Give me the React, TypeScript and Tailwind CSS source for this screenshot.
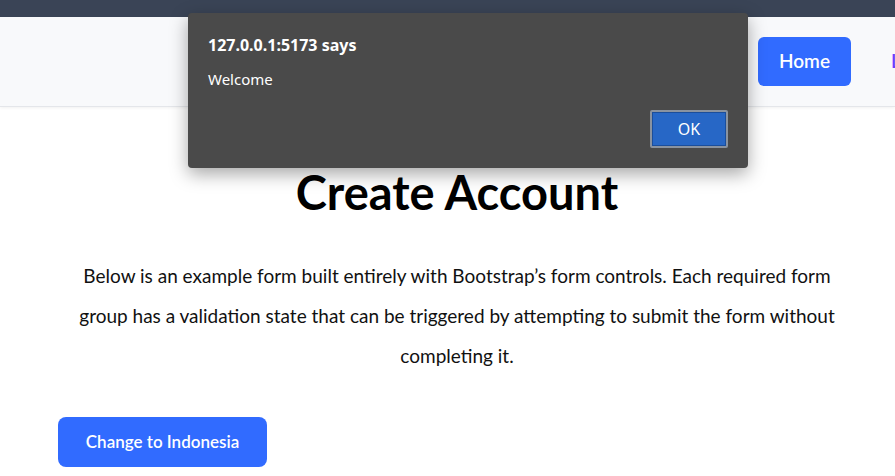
import React from "react";

export default function App() {
  return (
    <div className="relative h-[476px] w-[895px] overflow-hidden bg-white" style={{ fontFamily: "Lato, 'Open Sans', sans-serif" }}>
      <div className="h-[17px] bg-[#3a4456]" />
      <nav className="flex h-[90px] items-center justify-end gap-[40px] border-b border-[#e4e6ea] bg-[#f8f9fb] shadow-[0_1px_3px_rgba(0,0,0,0.06)]">
        <button className="h-[49px] w-[93px] rounded-[6px] bg-[#316bff] text-[19px] font-semibold text-white">Home</button>
        <span className="mr-[-36px] w-[40px] whitespace-nowrap text-[19px] font-semibold text-[#6a3dff]">Lo</span>
      </nav>
      <div className="ml-[58px] w-[798px]">
        <h1 className="mt-[56px] text-center text-[47px] font-bold leading-[58px] text-black">Create Account</h1>
        <p className="mt-[35px] text-center text-[19px] leading-[40px] text-[#111]">
          Below is an example form built entirely with Bootstrap’s form controls. Each required form
          <br />
          group has a validation state that can be triggered by attempting to submit the form without
          <br />
          completing it.
        </p>
        <button className="mt-[41px] h-[50px] w-[209px] rounded-[8px] bg-[#316bff] text-[17px] font-semibold text-white">Change to Indonesia</button>
      </div>

      <div
        className="absolute left-[188px] top-[13px] h-[155px] w-[560px] rounded-[4px] bg-[#4a4a4a] px-[20px] pt-[20px] shadow-[0_6px_18px_rgba(0,0,0,0.35)]"
        style={{ fontFamily: "'Noto Sans', 'Open Sans', sans-serif" }}
      >
        <div className="text-[16px] font-bold leading-[24px] text-white">127.0.0.1:5173 says</div>
        <div className="mt-[12px] text-[15px] leading-[20px] text-white">Welcome</div>
        <div className="mt-[21px] flex justify-end">
          <button className="h-[38px] w-[78px] rounded-[2px] border-2 border-[#8a93a0] bg-[#2767c6] text-[16px] text-white shadow-[inset_0_0_0_1px_#1b4e9b]">OK</button>
        </div>
      </div>
    </div>
  );
}
